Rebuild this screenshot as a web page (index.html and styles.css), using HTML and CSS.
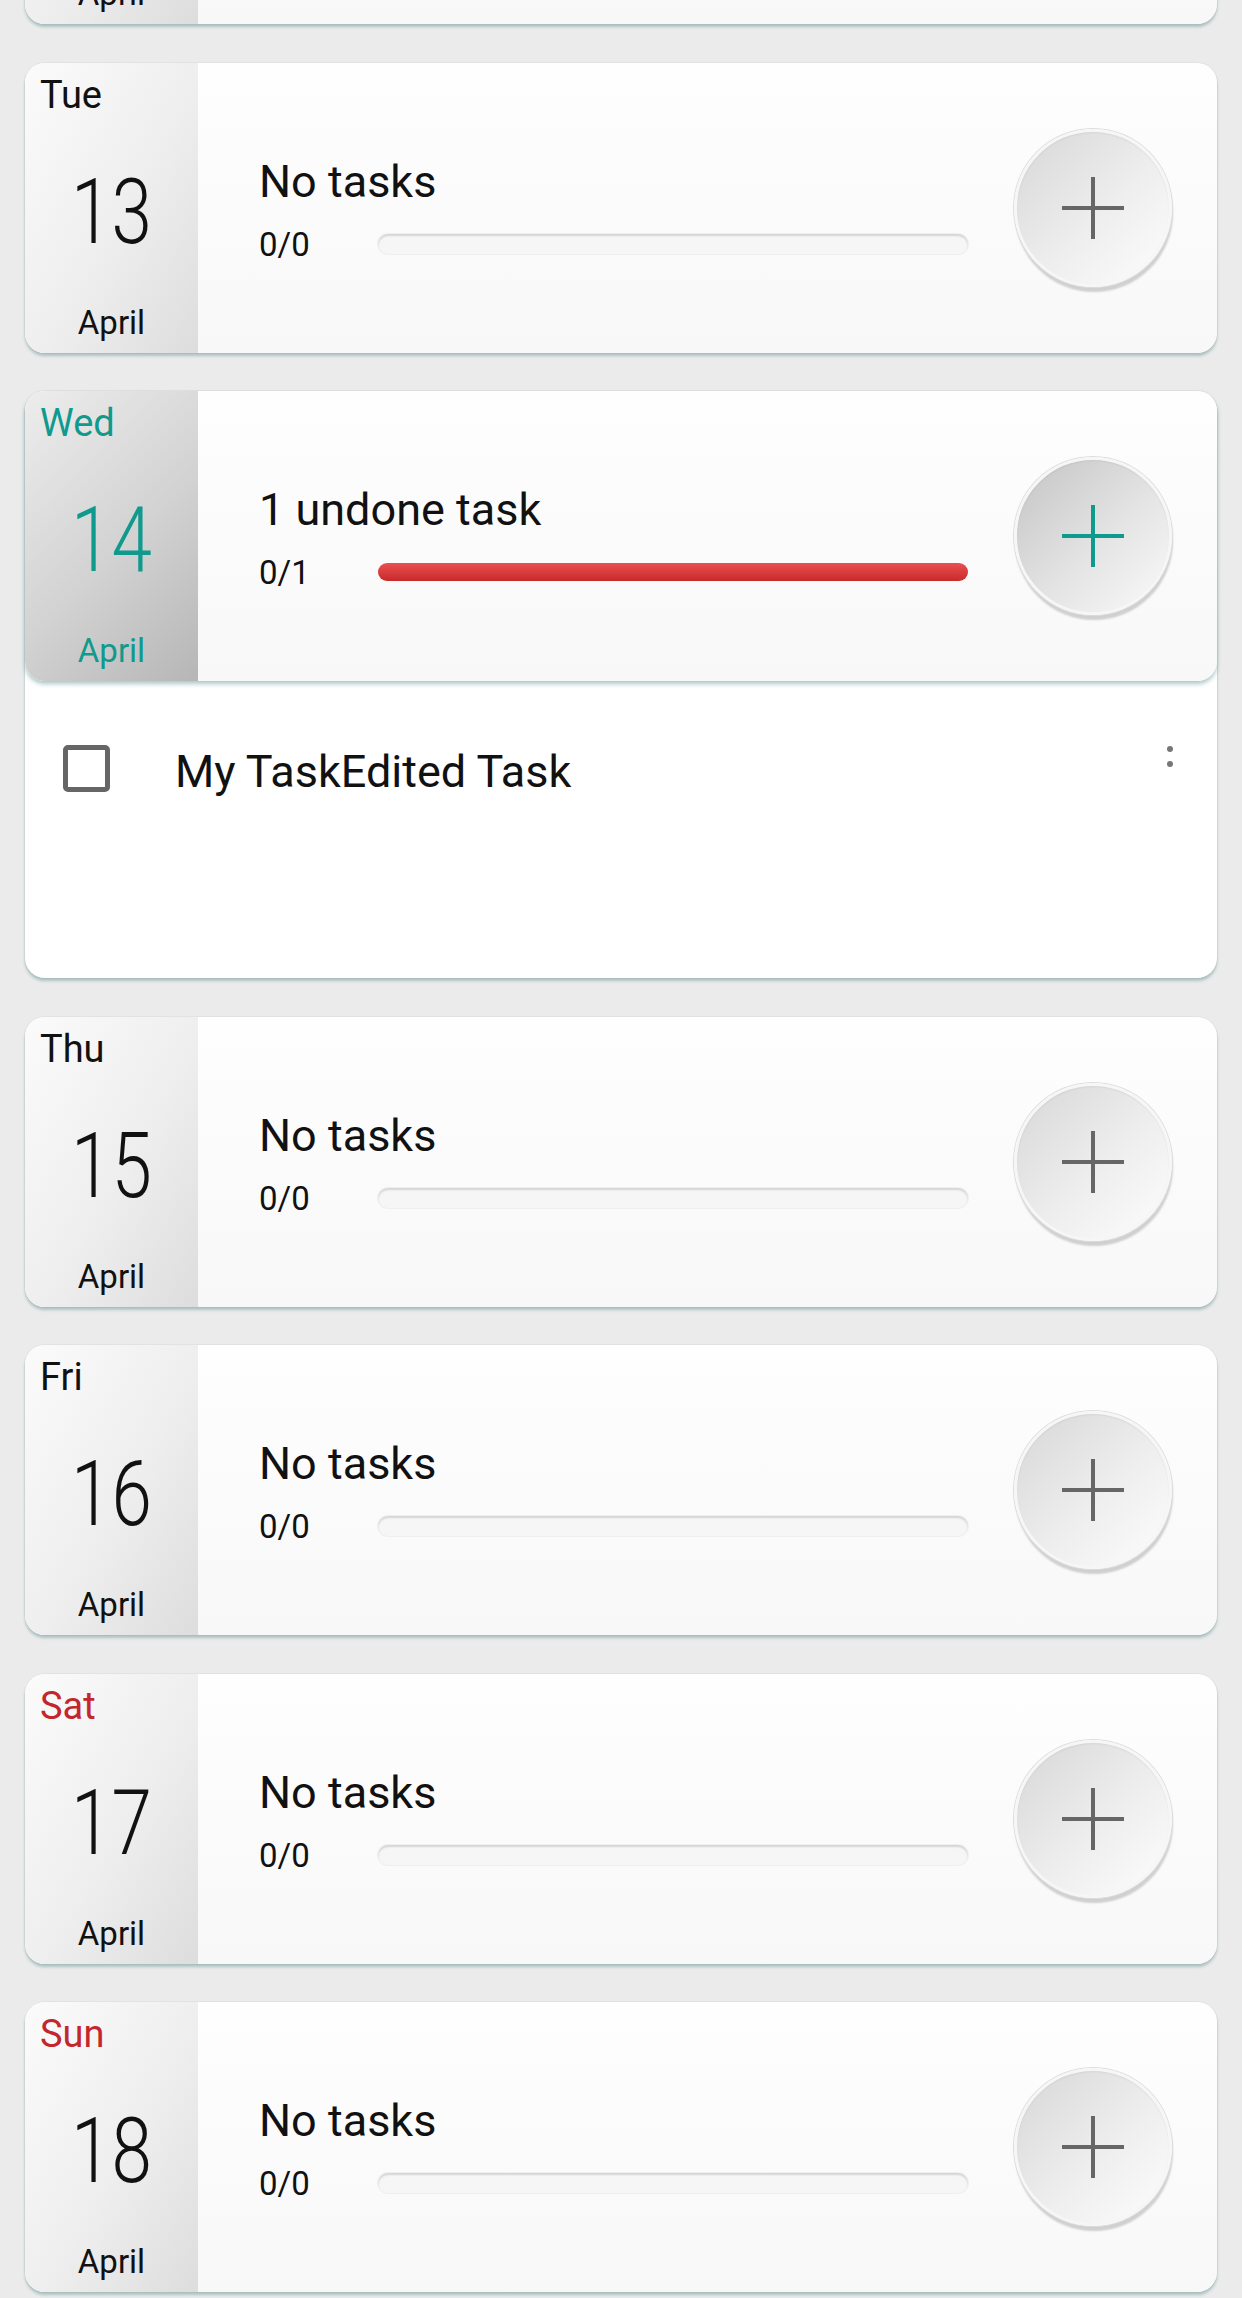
FILE: index.html
```html
<!DOCTYPE html>
<html lang="en">
<head>
<meta charset="utf-8">
<title>Week</title>
<link rel="stylesheet" href="styles.css">
</head>
<body>
<main class="list">
  <div class="peek">
    <article class="card">
      <div class="date"><span class="dow">Mon</span><span class="num">12</span><span class="mon">April</span></div>
      <div class="body">
        <div class="info">
          <div class="title">No tasks</div>
          <div class="progress"><span class="count">0/0</span><div class="track"></div></div>
        </div>
        <button class="add"><svg viewBox="0 0 62 62" width="62" height="62"><path d="M31 0V62M0 31H62"/></svg></button>
      </div>
    </article>
  </div>

  <article class="card">
    <div class="date"><span class="dow">Tue</span><span class="num">13</span><span class="mon">April</span></div>
    <div class="body">
      <div class="info">
        <div class="title">No tasks</div>
        <div class="progress"><span class="count">0/0</span><div class="track"></div></div>
      </div>
      <button class="add"><svg viewBox="0 0 62 62" width="62" height="62"><path d="M31 0V62M0 31H62"/></svg></button>
    </div>
  </article>

  <section class="day-open">
    <article class="card card--active">
      <div class="date"><span class="dow">Wed</span><span class="num">14</span><span class="mon">April</span></div>
      <div class="body">
        <div class="info">
          <div class="title">1 undone task</div>
          <div class="progress"><span class="count">0/1</span><div class="track track--undone"></div></div>
        </div>
        <button class="add"><svg viewBox="0 0 62 62" width="62" height="62"><path d="M31 0V62M0 31H62"/></svg></button>
      </div>
    </article>
    <div class="tasks">
      <div class="task">
        <span class="check"></span>
        <span class="task-name">My TaskEdited Task</span>
        <span class="kebab"><i></i><i></i></span>
      </div>
    </div>
  </section>

  <article class="card">
    <div class="date"><span class="dow">Thu</span><span class="num">15</span><span class="mon">April</span></div>
    <div class="body">
      <div class="info">
        <div class="title">No tasks</div>
        <div class="progress"><span class="count">0/0</span><div class="track"></div></div>
      </div>
      <button class="add"><svg viewBox="0 0 62 62" width="62" height="62"><path d="M31 0V62M0 31H62"/></svg></button>
    </div>
  </article>

  <article class="card">
    <div class="date"><span class="dow">Fri</span><span class="num">16</span><span class="mon">April</span></div>
    <div class="body">
      <div class="info">
        <div class="title">No tasks</div>
        <div class="progress"><span class="count">0/0</span><div class="track"></div></div>
      </div>
      <button class="add"><svg viewBox="0 0 62 62" width="62" height="62"><path d="M31 0V62M0 31H62"/></svg></button>
    </div>
  </article>

  <article class="card card--weekend">
    <div class="date"><span class="dow">Sat</span><span class="num">17</span><span class="mon">April</span></div>
    <div class="body">
      <div class="info">
        <div class="title">No tasks</div>
        <div class="progress"><span class="count">0/0</span><div class="track"></div></div>
      </div>
      <button class="add"><svg viewBox="0 0 62 62" width="62" height="62"><path d="M31 0V62M0 31H62"/></svg></button>
    </div>
  </article>

  <article class="card card--weekend">
    <div class="date"><span class="dow">Sun</span><span class="num">18</span><span class="mon">April</span></div>
    <div class="body">
      <div class="info">
        <div class="title">No tasks</div>
        <div class="progress"><span class="count">0/0</span><div class="track"></div></div>
      </div>
      <button class="add"><svg viewBox="0 0 62 62" width="62" height="62"><path d="M31 0V62M0 31H62"/></svg></button>
    </div>
  </article>
</main>
</body>
</html>
```

FILE: styles.css
```css
* { box-sizing: border-box; }

html, body { margin: 0; padding: 0; }

body {
  width: 1242px;
  height: 2298px;
  overflow: hidden;
  background: #ebebeb;
  font-family: Roboto, "Noto Sans", "Liberation Sans", sans-serif;
  color: #111;
}

.list {
  display: flex;
  flex-direction: column;
  gap: 38.5px;
  padding: 0 25px;
}

.peek {
  height: 30px;
  margin: 0 -25px -6px;
  padding: 0 25px 6px;
  overflow: hidden;
  display: flex;
  flex-direction: column;
  justify-content: flex-end;
}

.card {
  display: flex;
  flex-shrink: 0;
  height: 290px;
  border-radius: 20px;
  overflow: hidden;
  background: linear-gradient(#fefefe, #f8f8f8);
  box-shadow: 0 3px 3px rgba(100, 145, 145, 0.45), 0 0 0 1px rgba(0, 0, 0, 0.035);
}

.date {
  width: 173px;
  flex-shrink: 0;
  display: flex;
  flex-direction: column;
  padding-top: 13px;
  background: linear-gradient(120deg, #fbfbfb 0%, #eeeeee 55%, #dddddd 100%);
}

.dow {
  font-size: 38px;
  line-height: 38px;
  padding-left: 15px;
}

.num {
  margin-top: 53px;
  font-size: 91px;
  line-height: 91px;
  font-weight: 300;
  text-align: center;
  transform: scaleX(0.8);
}

.mon {
  margin-top: 48px;
  font-size: 33px;
  line-height: 33px;
  text-align: center;
}

.body {
  flex: 1;
  display: flex;
  align-items: center;
  padding: 0 45px 0 61px;
}

.info {
  flex: 1;
  align-self: flex-start;
  padding-top: 96px;
  margin-right: 46px;
}

.title {
  font-size: 45px;
  line-height: 45px;
}

.progress {
  display: flex;
  align-items: center;
  height: 36px;
  margin-top: 22px;
}

.count {
  width: 119px;
  font-size: 33px;
  line-height: 36px;
  padding-top: 2px;
}

.track {
  flex: 1;
  height: 20px;
  border-radius: 10px;
  background: #f6f6f6;
  box-shadow: inset 0 2px 2px rgba(0, 0, 0, 0.14), 0 0 0 1px rgba(0, 0, 0, 0.045);
}

.track--undone {
  height: 18px;
  border-radius: 9px;
  background: linear-gradient(#ec4f4f, #c62a2a);
  box-shadow: none;
}

.add {
  width: 158px;
  height: 158px;
  flex-shrink: 0;
  padding: 0;
  border: 3px solid #f6f6f6;
  border-radius: 50%;
  display: flex;
  align-items: center;
  justify-content: center;
  background: linear-gradient(135deg, #d7d7d7 0%, #eeeeee 55%, #fdfdfd 100%);
  box-shadow: 0 0 0 1px #dcdcdc, 1px 5px 2px rgba(0, 0, 0, 0.17), inset 0 1px 2px rgba(0, 0, 0, 0.06);
}

.add svg path {
  fill: none;
  stroke: #666;
  stroke-width: 4;
}

/* expanded day */
.day-open {
  flex-shrink: 0;
  border-radius: 20px;
  background: #fff;
  box-shadow: 0 3px 3px rgba(100, 145, 145, 0.45), 0 0 0 1px rgba(0, 0, 0, 0.035);
}

.day-open .card {
  box-shadow: 0 3px 4px rgba(100, 145, 145, 0.5);
}

.card--active .date {
  background: linear-gradient(135deg, #ededed 0%, #d2d2d2 55%, #b6b6b6 100%);
}

.card--active .dow,
.card--active .num,
.card--active .mon {
  color: #10998d;
}

.card--active .add {
  background: linear-gradient(135deg, #c4c4c4 0%, #e4e4e4 55%, #fafafa 100%);
}

.card--active .add svg path {
  stroke: #10998d;
}

.card--weekend .dow {
  color: #c3262b;
}

.tasks {
  height: 297px;
  padding: 64px 0 0 38px;
}

.task {
  display: flex;
  align-items: flex-start;
}

.check {
  width: 47px;
  height: 47px;
  flex-shrink: 0;
  border: 5px solid #666;
  border-radius: 5px;
}

.task-name {
  flex: 1;
  margin: 4px 0 0 65px;
  font-size: 45px;
  line-height: 45px;
}

.kebab {
  display: flex;
  flex-direction: column;
  gap: 9px;
  margin: 1px 44px 0 0;
}

.kebab i {
  display: block;
  width: 6px;
  height: 6px;
  border-radius: 50%;
  background: #777;
}
```
